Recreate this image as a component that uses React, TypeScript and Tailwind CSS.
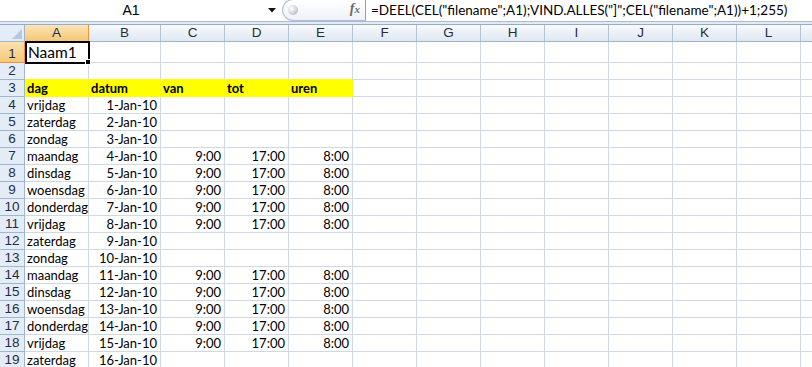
import React from "react";

const COLS = ["A", "B", "C", "D", "E", "F", "G", "H", "I", "J", "K", "L", ""];
const WIDTHS = [64, 72, 64, 64, 64, 64, 64, 64, 64, 64, 64, 64, 64];

const days = ["vrijdag", "zaterdag", "zondag", "maandag", "dinsdag", "woensdag", "donderdag"];

type Row = { a?: string; b?: string; c?: string; d?: string; e?: string };

function buildRows(): Row[] {
  const rows: Row[] = [];
  for (let i = 0; i < 16; i++) {
    const day = days[i % 7];
    const off = i === 0 || day === "zaterdag" || day === "zondag";
    rows.push({
      a: day,
      b: `${i + 1}-Jan-10`,
      c: off ? undefined : "9:00",
      d: off ? undefined : "17:00",
      e: off ? undefined : "8:00",
    });
  }
  return rows;
}

const cellFont = { fontFamily: "Lato, 'Liberation Sans', sans-serif" };
const hdrFont = { fontFamily: "'Liberation Sans', Arial, sans-serif" };

function RowHeader({ n, selected, h }: { n: number; selected?: boolean; h: string }) {
  return (
    <div
      className={`${h} w-[25px] shrink-0 flex items-end justify-center pb-[1px] border-r border-b text-[13.5px] leading-[15px] ${
        selected
          ? "bg-gradient-to-b from-[#fbe2ae] to-[#f6c878] border-r-[#f29436] border-b-[#f29436] text-[#1e2f45]"
          : "bg-[#e4ecf7] border-r-[#9eb6ce] border-b-[#9eb6ce] text-[#1e2f45]"
      }`}
      style={hdrFont}
    >
      {n}
    </div>
  );
}

function Cell({
  w,
  h,
  text,
  right,
  bold,
  yellow,
  bYellow,
}: {
  w: number;
  h: string;
  text?: string;
  right?: boolean;
  bold?: boolean;
  yellow?: boolean;
  bYellow?: boolean;
}) {
  return (
    <div
      className={`${h} shrink-0 flex items-end border-r border-b overflow-visible whitespace-nowrap text-[13px] leading-[16px] text-black ${
        right ? "justify-end pr-[3px]" : "justify-start pl-[2px]"
      } ${bold ? "font-bold" : ""} ${
        yellow ? "bg-[#ffff00] border-r-[#ffff00] border-b-[#ffff00]" : "bg-white border-r-[#d0d7e5] border-b-[#d0d7e5]"
      } ${bYellow ? "border-b-[#ffff00]" : ""}`}
      style={{ width: w, ...cellFont }}
    >
      {text}
    </div>
  );
}

export default function App() {
  const data = buildRows();
  return (
    <div className="w-[812px] h-[367px] overflow-hidden bg-white relative">
      {/* Formula bar */}
      <div className="flex h-[21px] bg-white">
        <div
          className="w-[262px] flex items-center justify-center text-[14px] text-black"
          style={hdrFont}
        >
          A1
        </div>
        <div className="w-[20px] flex items-center justify-center">
          <svg width="8" height="5" viewBox="0 0 8 5">
            <polygon points="0,0 8,0 4,4.5" fill="#111" />
          </svg>
        </div>
        <div className="w-[84px] h-[22px] -mt-[1px] rounded-l-[11px] border border-[#aebfd3] border-r-[#8c9fb8] bg-gradient-to-b from-[#ffffff] to-[#eef2f7] flex items-center justify-between pl-[5px] pr-[5px]">
          <div className="w-[10px] h-[10px] rounded-full bg-[radial-gradient(circle_at_35%_35%,#ffffff_0%,#d8dde3_45%,#9ba4ae_100%)]" />
          <span
            className="italic font-bold text-[14px] text-[#6b6b6b] leading-none -mt-[2px]"
            style={{ fontFamily: "'Liberation Serif', 'DejaVu Serif', serif" }}
          >
            f<span className="text-[11px]">x</span>
          </span>
        </div>
        <div
          className="flex-1 flex items-center pl-[5px] text-[13.5px] text-black whitespace-nowrap overflow-hidden"
          style={cellFont}
        >
          =DEEL(CEL("filename";A1);VIND.ALLES("]";CEL("filename";A1))+1;255)
        </div>
      </div>
      {/* separator */}
      <div className="h-[4px] border-t border-t-[#a9bcd3] border-b border-b-[#95acc7] bg-[#e3eaf3]" />

      {/* Column headers */}
      <div className="flex h-[17px]">
        <div className="w-[25px] shrink-0 h-[17px] bg-[#e4ecf7] border-r border-b border-[#9eb6ce] flex items-end justify-end pr-[2px] pb-[2px]">
          <svg width="10" height="10" viewBox="0 0 10 10">
            <polygon points="10,0 10,10 0,10" fill="#b8c8dc" />
          </svg>
        </div>
        {COLS.map((c, i) => (
          <div
            key={i}
            className={`h-[17px] shrink-0 flex items-center justify-center border-r border-b text-[13.5px] leading-none ${
              i === 0
                ? "bg-gradient-to-b from-[#fbe4b6] to-[#f5c676] border-r-[#f29436] border-b-[#f29436] text-[#1e2f45]"
                : "bg-gradient-to-b from-[#f8fafd] to-[#e0e7f1] border-r-[#b4c5da] border-b-[#9eb6ce] text-[#1e2f45]"
            }`}
            style={{ width: WIDTHS[i], ...hdrFont }}
          >
            {c}
          </div>
        ))}
      </div>

      {/* Row 1 */}
      <div className="flex">
        <RowHeader n={1} selected h="h-[21px]" />
        {COLS.map((c, i) => (
          <div
            key={i}
            className="h-[21px] shrink-0 flex items-end pl-[3px] border-r border-b border-[#d0d7e5] text-[15.5px] leading-[19px] text-black whitespace-nowrap"
            style={{ width: WIDTHS[i], ...cellFont }}
          >
            {i === 0 ? "Naam1" : ""}
          </div>
        ))}
      </div>

      {/* Row 2 */}
      <div className="flex">
        <RowHeader n={2} h="h-[17px]" />
        {COLS.map((c, i) => (
          <Cell key={i} w={WIDTHS[i]} h="h-[17px]" bYellow={i < 5} />
        ))}
      </div>

      {/* Row 3 */}
      <div className="flex">
        <RowHeader n={3} h="h-[17px]" />
        {COLS.map((c, i) => {
          const labels = ["dag", "datum", "van", "tot", "uren"];
          return (
            <Cell key={i} w={WIDTHS[i]} h="h-[17px]" text={labels[i]} bold yellow={i < 5} />
          );
        })}
      </div>

      {data.map((r, idx) => (
        <div className="flex" key={idx}>
          <RowHeader n={idx + 4} h="h-[17px]" />
          {COLS.map((c, i) => {
            const vals = [r.a, r.b, r.c, r.d, r.e];
            return (
              <Cell
                key={i}
                w={WIDTHS[i]}
                h="h-[17px]"
                text={vals[i]}
                right={i >= 1 && i <= 4}
              />
            );
          })}
        </div>
      ))}

      {/* Selection on A1 */}
      <div className="absolute left-[25px] top-[41px] w-[65px] h-[23px] border-2 border-black pointer-events-none" />
      <div className="absolute left-[85px] top-[59px] w-[6px] h-[6px] bg-black border border-white pointer-events-none" />
    </div>
  );
}
